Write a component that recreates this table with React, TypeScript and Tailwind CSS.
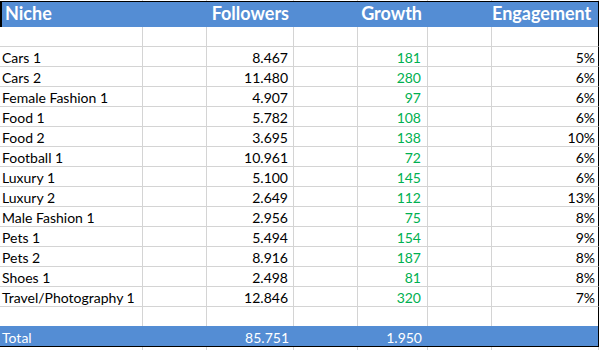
import React from 'react';

type Row = { niche: string; followers: string; growth: string; engagement: string };

const rows: Row[] = [
  { niche: 'Cars 1', followers: '8.467', growth: '181', engagement: '5%' },
  { niche: 'Cars 2', followers: '11.480', growth: '280', engagement: '6%' },
  { niche: 'Female Fashion 1', followers: '4.907', growth: '97', engagement: '6%' },
  { niche: 'Food 1', followers: '5.782', growth: '108', engagement: '6%' },
  { niche: 'Food 2', followers: '3.695', growth: '138', engagement: '10%' },
  { niche: 'Football 1', followers: '10.961', growth: '72', engagement: '6%' },
  { niche: 'Luxury 1', followers: '5.100', growth: '145', engagement: '6%' },
  { niche: 'Luxury 2', followers: '2.649', growth: '112', engagement: '13%' },
  { niche: 'Male Fashion 1', followers: '2.956', growth: '75', engagement: '8%' },
  { niche: 'Pets 1', followers: '5.494', growth: '154', engagement: '9%' },
  { niche: 'Pets 2', followers: '8.916', growth: '187', engagement: '8%' },
  { niche: 'Shoes 1', followers: '2.498', growth: '81', engagement: '8%' },
  { niche: 'Travel/Photography 1', followers: '12.846', growth: '320', engagement: '7%' },
];

// Excel-ish column widths (incl. the 1px gridline on the right)
const grid = 'grid grid-cols-[143px_64px_87px_64px_70px_64px_107px] w-[599px]';
const line = 'border-[#d4d4d4]';

// empty strip of cells, only the vertical gridlines
const Strip: React.FC<{ h: string; rightBlack?: boolean; bottom?: boolean }> = ({ h, rightBlack, bottom }) => (
  <div className={grid}>
    {[0, 1, 2, 3, 4, 5, 6].map((i) => (
      <div
        key={i}
        className={`${h} border-r ${bottom ? 'border-b' : ''} ${line} ${i === 6 && rightBlack ? 'border-r-black' : ''}`}
      />
    ))}
  </div>
);

const App: React.FC = () => {
  return (
    <div className="w-[601px] h-[350px] bg-white overflow-hidden font-['Lato',sans-serif] text-black">
      {/* row above the table */}
      <Strip h="h-px" />
      <div className="w-[599px] h-px bg-black" />

      {/* Header */}
      <div className={`${grid} h-[25px] bg-[#548dd4] text-white font-bold text-[18px] leading-[22px]`}>
        <div className="border-l-2 border-black pl-[3px]">Niche</div>
        <div />
        <div className="text-right pr-[5px]">Followers</div>
        <div />
        <div className="text-right pr-[6px]">Growth</div>
        <div />
        <div className="text-right pr-[7px] border-r border-black">Engagement</div>
      </div>

      <Strip h="h-[20px]" rightBlack bottom />

      {/* Body */}
      {rows.map((r) => (
        <div key={r.niche} className={`${grid} text-[14px] leading-[19px]`}>
          <div className={`h-[20px] pt-px border-r border-b ${line} pl-[2px] whitespace-nowrap`}>{r.niche}</div>
          <div className={`h-[20px] border-r border-b ${line}`} />
          <div className={`h-[20px] pt-px border-r border-b ${line} text-right pr-[5px]`}>{r.followers}</div>
          <div className={`h-[20px] border-r border-b ${line}`} />
          <div className={`h-[20px] pt-px border-r border-b ${line} text-right pr-[6px] text-[#00b050]`}>{r.growth}</div>
          <div className={`h-[20px] border-r border-b ${line}`} />
          <div className={`h-[20px] pt-px border-r border-b ${line} border-r-black text-right pr-[3px]`}>{r.engagement}</div>
        </div>
      ))}

      <Strip h="h-[19px]" rightBlack />

      {/* Total */}
      <div className={`${grid} h-[21px] bg-[#548dd4] text-white text-[14px] leading-[20px] border-b border-black`}>
        <div className="pl-[2px] pt-[2px]">Total</div>
        <div />
        <div className="text-right pr-[5px] pt-[2px]">85.751</div>
        <div />
        <div className="text-right pr-[6px] pt-[2px]">1.950</div>
        <div />
        <div className="border-r border-black" />
      </div>

      <Strip h="h-[3px]" />
    </div>
  );
};

export default App;
